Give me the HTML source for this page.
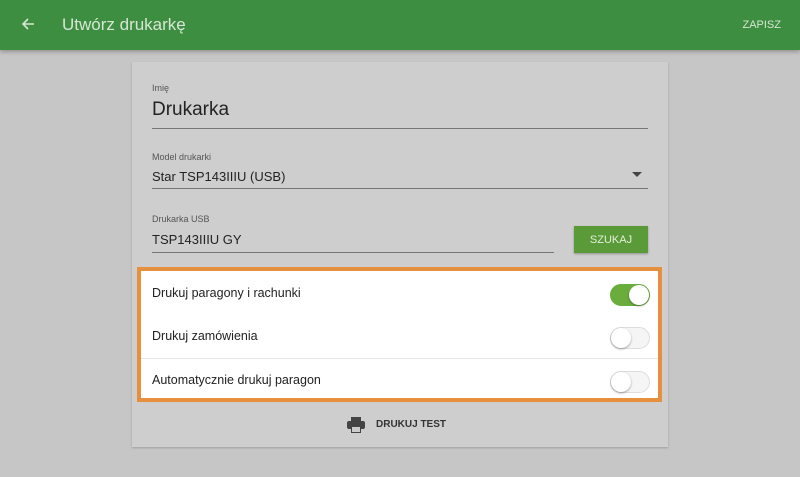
<!DOCTYPE html>
<html><head><style>
body{margin:0;width:800px;height:477px;background:#c6c6c6;font-family:"Liberation Sans",sans-serif;position:relative;overflow:hidden}
.hdr{position:absolute;left:0;top:0;width:800px;height:50px;background:#3e8e41;box-shadow:0 2px 4px rgba(0,0,0,.25)}
.hdr .t{position:absolute;left:62px;top:15px;font-size:17px;color:#d6e6d4}
.hdr .s{position:absolute;right:19px;top:19px;font-size:11px;color:#d6e6d4}
.card{position:absolute;left:132px;top:62px;width:536px;height:385px;background:#cecece;box-shadow:0 1px 2px rgba(0,0,0,.2)}
.a{position:absolute;color:#222}
.lbl{font-size:9px;color:#555}
.line{position:absolute;height:1px;background:#777}
.box{position:absolute;left:137px;top:267px;width:517px;height:127px;border:4px solid #e58f3f;background:#fff}
.row{position:absolute;left:11px;font-size:12.5px;color:#222}
.tg{position:absolute;left:469px;width:40px;height:22px;border-radius:11px;background:#f5f5f5;border:1px solid #ddd;box-sizing:border-box}
.tg i{position:absolute;left:0;top:0;width:20px;height:20px;border-radius:50%;background:#fff;box-shadow:0 1px 2px rgba(0,0,0,.35)}
</style></head><body>
<div class="hdr">
<svg style="position:absolute;left:20px;top:16px" width="16" height="16" viewBox="0 0 16 16"><path d="M14 8H3M8 3L3 8l5 5" stroke="#d6e6d4" stroke-width="1.6" fill="none"/></svg>
<div class="t">Utwórz drukarkę</div><div class="s">ZAPISZ</div></div>
<div class="card"></div>
<div class="a lbl" style="left:152px;top:83px">Imię</div>
<div class="a" style="left:152px;top:99px;font-size:19px">Drukarka</div>
<div class="line" style="left:152px;top:128px;width:496px"></div>
<div class="a lbl" style="left:152px;top:152px">Model drukarki</div>
<div class="a" style="left:152px;top:169px;font-size:13px">Star TSP143IIIU (USB)</div>
<div class="a" style="left:632px;top:172px;width:0;height:0;border-left:5px solid transparent;border-right:5px solid transparent;border-top:5px solid #444"></div>
<div class="line" style="left:152px;top:188px;width:496px"></div>
<div class="a lbl" style="left:152px;top:214px">Drukarka USB</div>
<div class="a" style="left:152px;top:232px;font-size:13px">TSP143IIIU GY</div>
<div class="line" style="left:152px;top:252px;width:402px"></div>
<div class="a" style="left:574px;top:226px;width:74px;height:27px;background:#5b9a38;color:#e3efdc;font-size:11px;text-align:center;line-height:29px;box-shadow:0 1px 2px rgba(0,0,0,.3)">SZUKAJ</div>
<div class="box">
<div class="row" style="top:15px">Drukuj paragony i rachunki</div>
<div class="tg" style="top:13px;background:#6aad3d;border-color:#6aad3d"><i style="left:18px;top:0"></i></div>
<div class="row" style="top:58px">Drukuj zamówienia</div>
<div class="tg" style="top:56px"><i></i></div>
<div style="position:absolute;left:0;top:87px;width:517px;height:1px;background:#e6e6e6"></div>
<div class="row" style="top:102px">Automatycznie drukuj paragon</div>
<div class="tg" style="top:100px"><i></i></div>
</div>
<svg style="position:absolute;left:347px;top:417px" width="18" height="16" viewBox="0 0 18 16"><rect x="4" y="0" width="10" height="4" fill="#444"/><rect x="0" y="4" width="18" height="8" rx="2" fill="#444"/><rect x="4" y="9" width="10" height="7" fill="#444"/><rect x="5" y="10" width="8" height="5" fill="#ccc"/></svg>
<div class="a" style="left:376px;top:419px;font-size:10px;font-weight:bold;color:#333">DRUKUJ TEST</div>
</body></html>
